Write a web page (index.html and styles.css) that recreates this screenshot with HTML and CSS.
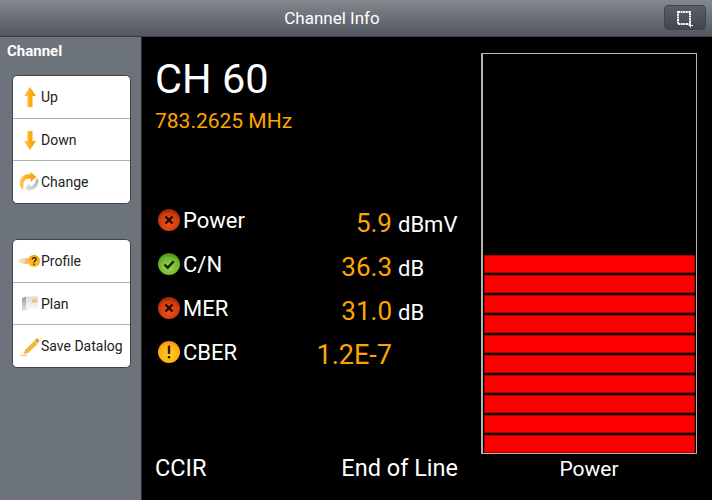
FILE: index.html
```html
<!DOCTYPE html>
<html lang="en">
<head>
<meta charset="utf-8">
<title>Channel Info</title>
<link rel="stylesheet" href="styles.css">
</head>
<body>
<svg class="defs" width="0" height="0" aria-hidden="true">
  <defs>
    <linearGradient id="arrow" x1="0" y1="0" x2="1" y2="0"><stop offset="0" stop-color="#ffc75a"/><stop offset=".6" stop-color="#ffa90f"/><stop offset="1" stop-color="#f59c06"/></linearGradient>
    <linearGradient id="grey" x1="0" y1="1" x2="1" y2="0"><stop offset="0" stop-color="#e4e8ea"/><stop offset="1" stop-color="#a9b1b6"/></linearGradient>
    <radialGradient id="red" cx=".5" cy=".65" r=".65"><stop offset="0" stop-color="#f0521a"/><stop offset=".7" stop-color="#cf3a0e"/><stop offset="1" stop-color="#8e2408"/></radialGradient>
    <radialGradient id="green" cx=".5" cy=".65" r=".65"><stop offset="0" stop-color="#9bd84a"/><stop offset=".7" stop-color="#6fb52c"/><stop offset="1" stop-color="#45851a"/></radialGradient>
    <radialGradient id="yellow" cx=".5" cy=".6" r=".65"><stop offset="0" stop-color="#ffd21e"/><stop offset=".7" stop-color="#ffac12"/><stop offset="1" stop-color="#d97c06"/></radialGradient>
    <linearGradient id="sheet" x1="0" y1="0" x2="0" y2="1"><stop offset="0" stop-color="#dcdcdc"/><stop offset="1" stop-color="#fbfbfb"/></linearGradient>
    <linearGradient id="side" x1="0" y1="0" x2="0" y2="1"><stop offset="0" stop-color="#9a9a9a"/><stop offset="1" stop-color="#e4e4e4"/></linearGradient>
  </defs>
</svg>
<header class="topbar">
  <h1 class="topbar-title">Channel Info</h1>
  <button class="crop-btn" aria-label="Select">
    <svg width="20" height="20" viewBox="0 0 20 20"><path d="M3 4h12v12H3z" fill="none" stroke="#fff" stroke-width="2" stroke-dasharray="2 .6"/><path d="M13.500 17.500h4.500M15.500 15.500v4" stroke="#fff" stroke-width="1"/></svg>
  </button>
</header>
<div class="main">
  <aside class="sidebar">
    <div class="side-title">Channel</div>
    <div class="group">
      <div class="item">
        <svg class="item-icon" width="23" height="24" viewBox="0 0 23 24"><path d="M12 2l6 9h-3.500v11h-5V11H6z" fill="url(#arrow)"/></svg>
        <span>Up</span>
      </div>
      <div class="item">
        <svg class="item-icon" width="23" height="24" viewBox="0 0 23 24"><path d="M12 22l6-9h-3.500V3h-5v10H6z" fill="url(#arrow)"/></svg>
        <span>Down</span>
      </div>
      <div class="item">
        <svg class="item-icon" width="23" height="24" viewBox="0 0 23 24"><path d="M5 20C1.500 17 1 12 3 8.500 5 5 9 3.800 12.500 4.500V2l6 5-6 5V8.500C8 8 5 11 5.500 15z" fill="url(#arrow)"/><path d="M20 8c1.800 6-2.500 12.500-8.500 12v2L7 18l4.500-4.500v2.500c3.500.3 6-2.500 6-6z" fill="url(#grey)"/></svg>
        <span>Change</span>
      </div>
    </div>
    <div class="group">
      <div class="item">
        <svg class="item-icon" width="23" height="24" viewBox="0 0 23 24"><rect x="1" y="10" width="3" height="4" fill="#f6e3b8"/><rect x="4" y="9" width="3" height="6" fill="#dfe6b0"/><rect x="7" y="9" width="3" height="6" fill="#f3b98d"/><circle cx="16" cy="12" r="6" fill="url(#yellow)"/><text x="16" y="15.500" class="q">?</text></svg>
        <span>Profile</span>
      </div>
      <div class="item">
        <svg class="item-icon" width="23" height="24" viewBox="0 0 23 24"><path d="M4 6l4-1.500V18l-4 1z" fill="url(#side)"/><path d="M8 4.500h12V16L8 18z" fill="url(#sheet)"/><rect x="14" y="7.500" width="5" height="3" fill="#f2c072"/></svg>
        <span>Plan</span>
      </div>
      <div class="item">
        <svg class="item-icon" width="23" height="24" viewBox="0 0 23 24"><path d="M7 16L16 7l3.500 3-9.500 9-4.500 1.500z" fill="#f4b63a"/><path d="M16.500 6.500L19 4l2.500 2.500-2 3z" fill="#e89a20"/><path d="M2 21.500h7" stroke="#f3c56e" stroke-width="1"/></svg>
        <span>Save Datalog</span>
      </div>
    </div>
  </aside>
  <main class="content">
    <div class="info">
      <div class="channel">CH 60</div>
      <div class="freq">783.2625 MHz</div>
      <div class="rows">
        <div class="row">
          <svg class="status" width="22" height="22" viewBox="0 0 22 22"><circle cx="11" cy="11" r="11" fill="url(#red)"/><path d="M7.500 7.500l7 7M14.500 7.500l-7 7" stroke="#210a04" stroke-width="2.400"/></svg>
          <span class="label">Power</span>
          <span class="value">5.9</span><span class="unit">dBmV</span>
        </div>
        <div class="row">
          <svg class="status" width="22" height="22" viewBox="0 0 22 22"><circle cx="11" cy="11" r="11" fill="url(#green)"/><path d="M6.500 11.500l3.200 3.200 6-6.500" fill="none" stroke="#142208" stroke-width="2.400"/></svg>
          <span class="label">C/N</span>
          <span class="value">36.3</span><span class="unit">dB</span>
        </div>
        <div class="row">
          <svg class="status" width="22" height="22" viewBox="0 0 22 22"><circle cx="11" cy="11" r="11" fill="url(#red)"/><path d="M7.500 7.500l7 7M14.500 7.500l-7 7" stroke="#210a04" stroke-width="2.400"/></svg>
          <span class="label">MER</span>
          <span class="value">31.0</span><span class="unit">dB</span>
        </div>
        <div class="row">
          <svg class="status" width="22" height="22" viewBox="0 0 22 22"><circle cx="11" cy="11" r="11" fill="url(#yellow)"/><path d="M11 4.500v8.500" stroke="#2a1a02" stroke-width="2.400"/><path d="M11 15v2.400" stroke="#2a1a02" stroke-width="2.400"/></svg>
          <span class="label">CBER</span>
          <span class="value value-wide">1.2E-7</span>
        </div>
      </div>
      <div class="foot">
        <span>CCIR</span>
        <span>End of Line</span>
      </div>
    </div>
    <div class="meter">
      <div class="bars">
        <div class="bar"></div><div class="bar"></div><div class="bar"></div><div class="bar"></div><div class="bar"></div>
        <div class="bar"></div><div class="bar"></div><div class="bar"></div><div class="bar"></div><div class="bar"></div>
      </div>
      <div class="meter-label">Power</div>
    </div>
  </main>
</div>
</body>
</html>
```
FILE: styles.css
```css
* { box-sizing: border-box; }
html, body { margin: 0; height: 100%; }
body {
  width: 712px;
  height: 500px;
  background: #000;
  overflow: hidden;
  font-family: Roboto, sans-serif;
  display: flex;
  flex-direction: column;
}
.defs { position: absolute; }
.topbar {
  height: 37px;
  flex: none;
  background: linear-gradient(#83878e, #52565e);
  border-bottom: 1px solid #3a3c41;
  display: flex;
  align-items: center;
  justify-content: center;
  padding-right: 48px;
  position: relative;
}
.topbar-title {
  margin: 0;
  font-size: 17px;
  font-weight: 400;
  color: #fff;
}
.crop-btn {
  position: absolute;
  top: 5px;
  right: 6px;
  width: 42px;
  height: 25px;
  padding: 0;
  border: 1px solid #3f434b;
  border-radius: 4px;
  background: linear-gradient(#5a5e68, #41454f);
  display: flex;
  align-items: center;
  justify-content: center;
}
.main { flex: 1; display: flex; min-height: 0; }
.sidebar {
  width: 142px;
  flex: none;
  background: #6d737b;
  padding: 6px 10px 0 12px;
  border-right: 1px solid #2a2c30;
}
.side-title {
  margin-left: -5px;
  font-size: 15px;
  font-weight: 700;
  color: #fff;
  line-height: 17px;
  margin-bottom: 15px;
}
.group {
  background: #fff;
  border: 1px solid #40444a;
  border-radius: 5px;
  margin-bottom: 35px;
  overflow: hidden;
}
.item {
  height: 43px;
  display: flex;
  align-items: center;
  padding-left: 5px;
  font-size: 14px;
  color: #222;
  border-bottom: 1px solid #aeb0b2;
}
.item:nth-child(2) { height: 42px; }
.item:last-child { border-bottom: 0; height: 42px; }
.item-icon { flex: none; }
.q { font: 700 10px "Liberation Sans", sans-serif; text-anchor: middle; fill: #222; }
.content {
  flex: 1;
  display: flex;
  min-width: 0;
  padding: 16px 15px 0 13px;
}
.info {
  width: 303px;
  flex: none;
  display: flex;
  flex-direction: column;
}
.channel {
  font-size: 41.500px;
  line-height: 48px;
  margin-top: 2px;
  color: #fff;
}
.freq {
  font-size: 21px;
  line-height: 24px;
  color: #ffa500;
  margin-top: 6px;
}
.rows { margin-top: 65px; }
.row {
  height: 44px;
  display: grid;
  grid-template-columns: 25px 1fr auto 66px;
  align-items: center;
  padding-left: 3px;
  color: #fff;
  font-size: 22px;
}
.status { display: block; }
.value {
  grid-column: 3;
  padding-top: 6px;
  font-size: 26px;
  color: #ffa500;
}
.value-wide { font-size: 27px; }
.unit { grid-column: 4; margin-left: 6px; padding-top: 8px; }
.foot {
  display: flex;
  justify-content: space-between;
  margin-top: auto;
  margin-bottom: 19px;
  color: #fff;
  font-size: 23.500px;
  line-height: 26px;
}
.meter {
  width: 216px;
  flex: none;
  display: flex;
  flex-direction: column;
  margin-left: auto;
}
.bars {
  height: 401px;
  border: 1px solid #b5b5b5;
  border-left-width: 2px;
  display: flex;
  flex-direction: column;
  justify-content: flex-end;
  gap: 2px;
  padding: 0 1px;
}
.bar {
  height: 18px;
  background: #f00;
  box-shadow: inset 0 0 0 1px #b00000;
}
.meter-label {
  text-align: center;
  color: #fff;
  font-size: 21px;
  line-height: 28px;
  margin-top: 1px;
}
```
